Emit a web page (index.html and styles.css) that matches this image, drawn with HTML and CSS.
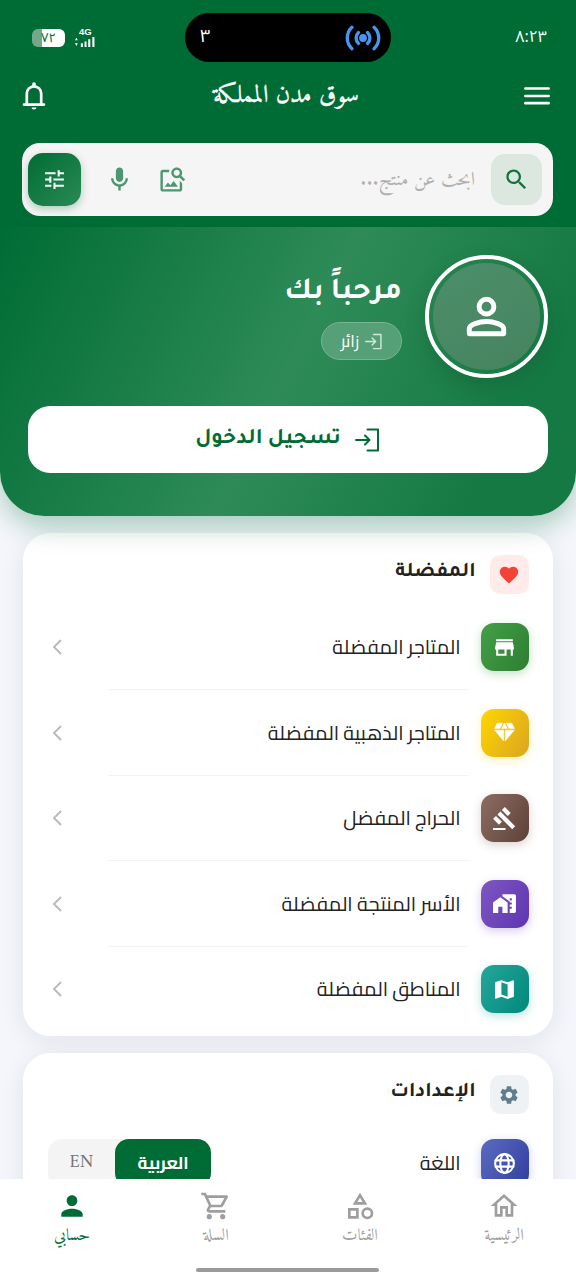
FILE: index.html
```html
<!DOCTYPE html>
<html lang="ar" dir="rtl">
<head>
<meta charset="utf-8">
<title>سوق مدن المملكة</title>
<link rel="stylesheet" href="styles.css">
</head>
<body>
<div class="app">
  <header class="top">
    <div class="status">
      <span class="clock">٨:٢٣</span>
      <div class="island">
        <svg class="cast" viewBox="0 0 36 28"><circle cx="18" cy="14" r="3.900" fill="#4795ee"/><path d="M13.500 8.500a7.500 7.500 0 0 0 0 11M22.500 8.500a7.500 7.500 0 0 1 0 11M7 3.300a14.500 14.500 0 0 0 0 21.400M29 3.300a14.500 14.500 0 0 1 0 21.400" fill="none" stroke="#4795ee" stroke-width="3.300" stroke-linecap="round"/></svg>
        <span class="count">٣</span>
      </div>
      <div class="phone">
        <div class="signal"><span class="gen">4G</span>
          <svg viewBox="0 0 22 12"><path d="M0 4.500 1.600 2 3.200 4.500zM0 8 1.600 11 3.200 8zM6.500 8h2.200v4H6.500zM10.500 6h2.200v6h-2.200zM14.500 3.500h2.300V12h-2.300zM19 1h2.300v11H19z" fill="#fff"/></svg>
        </div>
        <div class="battery"><span>٧٢</span></div>
      </div>
    </div>
    <div class="bar">
      <svg class="menu" viewBox="0 0 26 18"><path d="M1.400 1.500h23.200M1.400 9h23.200M1.400 16.200h23.200" stroke="#fff" stroke-width="2.700" stroke-linecap="round"/></svg>
      <h1 class="title">سوق مدن المملكة</h1>
      <svg class="bell line" viewBox="0 0 24 28"><path d="M2 22.600h20M4.800 22V11.500a7.200 7.200 0 0 1 14.400 0V22" stroke-width="2.700"/><path d="M12 3V2" stroke-width="3.600"/><path d="M9.500 25.500h5a2.500 2 0 0 1-5 0z" fill="#fff" stroke="none"/></svg>
    </div>
    <div class="search">
      <div class="find"><svg viewBox="0 0 24 24"><path d="M15.500 14h-.79l-.28-.27C15.410 12.590 16 11.110 16 9.500 16 5.910 13.090 3 9.500 3S3 5.910 3 9.500 5.910 16 9.500 16c1.610 0 3.090-.59 4.230-1.570l.27.28v.79l5 4.990L20.490 19l-4.990-5zm-6 0C7.010 14 5 11.990 5 9.500S7.010 5 9.500 5 14 7.010 14 9.500 11.990 14 9.500 14z"/></svg></div>
      <span class="hint">ابحث عن منتج<span class="dots">...</span></span>
      <svg class="imgsearch" viewBox="0 0 24 24"><path d="M18 13v7H4V6h5.020c.05-.71.22-1.380.48-2H4c-1.100 0-2 .9-2 2v14c0 1.100.9 2 2 2h14c1.100 0 2-.9 2-2v-5l-2-2zm-1.500 5h-11l2.750-3.530 1.960 2.360 2.750-3.540L16.500 18zm2.800-9.110c.44-.7.7-1.510.7-2.390C20 4.010 17.990 2 15.500 2S11 4.010 11 6.500s2.010 4.500 4.490 4.500c.88 0 1.700-.26 2.390-.7L21 13.420 22.420 12 19.300 8.890zM15.500 9C14.120 9 13 7.880 13 6.500S14.120 4 15.500 4 18 5.120 18 6.500 16.880 9 15.500 9z"/></svg>
      <svg class="mic" viewBox="0 0 24 24"><path d="M12 14c1.660 0 3-1.340 3-3V5c0-1.660-1.340-3-3-3S9 3.340 9 5v6c0 1.660 1.340 3 3 3zm5-3c0 2.760-2.240 5-5 5s-5-2.240-5-5H5c0 3.530 2.610 6.430 6 6.920V21h2v-3.080c3.390-.49 6-3.390 6-6.920h-2z"/></svg>
      <div class="tune"><svg viewBox="0 0 24 24"><path d="M3 17v2h6v-2H3zM3 5v2h10V5H3zm10 16v-2h8v-2h-8v-2h-2v6h2zM7 9v2H3v2h4v2h2V9H7zm14 4v-2H11v2h10zm-6-4h2V7h4V5h-4V3h-2v6z"/></svg></div>
    </div>
  </header>

  <section class="hero">
    <div class="profile">
      <div class="avatar"><div class="face"><svg class="line" viewBox="0 0 24 24"><circle cx="12" cy="8" r="3"/><path d="M5 19v-2c0-1.600 4-3 7-3s7 1.400 7 3v2z"/></svg></div></div>
      <div class="who">
        <h2 class="hello">مرحباً بك</h2>
        <div class="guest"><svg class="line" viewBox="0 0 24 24"><path d="M1 12h13M10 7l5 5-5 5M12 2h10.500v20H12"/></svg><span>زائر</span></div>
      </div>
    </div>
    <div class="login"><svg class="line" viewBox="0 0 24 24"><path d="M1 12h13M10 7.500l4.500 4.500-4.500 4.500M12.500 1.500h10.500v21H12.500"/></svg><span>تسجيل الدخول</span></div>
  </section>

  <main class="content">
    <section class="card">
      <div class="head"><div class="badge red"><svg viewBox="0 0 24 24"><path d="M12 21.350l-1.450-1.320C5.400 15.360 2 12.280 2 8.500 2 5.420 4.420 3 7.500 3c1.740 0 3.410.81 4.500 2.090C13.090 3.810 14.760 3 16.500 3 19.580 3 22 5.420 22 8.500c0 3.780-3.400 6.860-8.550 11.540L12 21.350z"/></svg></div><h3>المفضلة</h3></div>
      <div class="row"><div class="tile green"><svg viewBox="0 0 24 24"><path d="M20 4H4v2h16V4zm1 10v-2l-1-5H4l-1 5v2h1v6h10v-6h4v6h2v-6h1zm-9 4H6v-4h6v4z"/></svg></div><span class="label">المتاجر المفضلة</span><svg class="chev" viewBox="0 0 10 16"><path d="M9 1 2 8l7 7"/></svg></div>
      <div class="row"><div class="tile gold"><svg viewBox="0 0 24 24"><path d="M12.160 3h-.32L9.210 8.250h5.580zm4.300 5.250h5.160L19 3h-5.160zm4.920 1.500h-8.630V20.100zM11.250 20.100V9.750H2.620zM7.540 8.250 10.160 3H5L2.380 8.250z" stroke="#fff" stroke-width=".5" stroke-linejoin="round"/></svg></div><span class="label">المتاجر الذهبية المفضلة</span><svg class="chev" viewBox="0 0 10 16"><path d="M9 1 2 8l7 7"/></svg></div>
      <div class="row"><div class="tile brown"><svg viewBox="0 0 24 24"><path d="M1 21h12v2H1v-2zM5.240 8.070l2.830-2.830 14.140 14.140-2.830 2.830L5.240 8.070zM12.320 1l5.660 5.660-2.830 2.830-5.660-5.660L12.320 1zM3.830 9.480l5.660 5.660-2.830 2.830L1 12.310l2.830-2.830z"/></svg></div><span class="label">الحراج المفضل</span><svg class="chev" viewBox="0 0 10 16"><path d="M9 1 2 8l7 7"/></svg></div>
      <div class="row"><div class="tile purple"><svg viewBox="0 0 24 24"><path fill-rule="evenodd" d="M1 11v10h5v-6h4v6h5V11L8 6zM10 3v1.970l7 5V11h2v2h-2v2h2v2h-2v4h4.500q1.500 0 1.500-1.500v-15q0-1.500-1.500-1.500zM19 9h-2V7h2v2z"/></svg></div><span class="label">الأسر المنتجة المفضلة</span><svg class="chev" viewBox="0 0 10 16"><path d="M9 1 2 8l7 7"/></svg></div>
      <div class="row last"><div class="tile teal"><svg viewBox="0 0 24 24"><path d="M20.500 3l-.16.03L15 5.100 9 3 3.360 4.900c-.21.07-.36.25-.36.48V20.500c0 .28.22.5.5.5l.16-.03L9 18.900l6 2.100 5.640-1.900c.21-.07.36-.25.36-.48V3.500c0-.28-.22-.5-.5-.5zM15 19l-6-2.110V5l6 2.110V19z"/></svg></div><span class="label">المناطق المفضلة</span><svg class="chev" viewBox="0 0 10 16"><path d="M9 1 2 8l7 7"/></svg></div>
    </section>
    <section class="card">
      <div class="head"><div class="badge gray"><svg viewBox="0 0 24 24"><path d="M19.140 12.940c.04-.3.06-.61.06-.94 0-.32-.02-.64-.07-.94l2.030-1.580c.18-.14.23-.41.12-.61l-1.920-3.320c-.12-.22-.37-.29-.59-.22l-2.390.96c-.5-.38-1.030-.7-1.620-.94l-.36-2.540c-.04-.24-.24-.41-.48-.41h-3.840c-.24 0-.43.17-.47.41l-.36 2.540c-.59.24-1.130.57-1.620.94l-2.390-.96c-.22-.08-.47 0-.59.22L2.740 8.870c-.12.21-.08.47.12.61l2.030 1.580c-.05.3-.09.63-.09.94s.02.64.07.94l-2.030 1.580c-.18.14-.23.41-.12.61l1.920 3.320c.12.22.37.29.59.22l2.390-.96c.5.38 1.030.7 1.620.94l.36 2.540c.05.24.24.41.48.41h3.840c.24 0 .44-.17.47-.41l.36-2.540c.59-.24 1.130-.56 1.620-.94l2.390.96c.22.08.47 0 .59-.22l1.920-3.320c.12-.22.07-.47-.12-.61l-2.010-1.580zM12 15.600c-1.980 0-3.600-1.620-3.600-3.600s1.620-3.600 3.600-3.600 3.600 1.620 3.600 3.600-1.620 3.600-3.600 3.600z"/></svg></div><h3>الإعدادات</h3></div>
      <div class="row lang last"><div class="tile indigo"><svg class="line" viewBox="0 0 24 24"><circle cx="12" cy="12" r="9"/><ellipse cx="12" cy="12" rx="4" ry="9"/><path d="M3.500 9h17M3.500 15h17"/></svg></div><span class="label">اللغة</span>
        <div class="toggle"><span class="on">العربية</span><span class="en">EN</span></div>
      </div>
    </section>
  </main>

  <nav class="tabs">
    <div class="tab"><svg viewBox="0 0 24 24"><path d="M12 5.690l5 4.500V18h-2v-6H9v6H7v-7.810l5-4.500M12 3L2 12h3v8h6v-6h2v6h6v-8h3L12 3z"/></svg><span>الرئيسية</span></div>
    <div class="tab"><svg viewBox="0 0 24 24"><path fill-rule="evenodd" d="M12 2 6.500 11h11zM12 5.840 13.930 9h-3.870zM17.500 13a4.500 4.500 0 1 0 0 9 4.500 4.500 0 0 0 0-9zm0 7a2.500 2.500 0 1 1 0-5 2.500 2.500 0 0 1 0 5zM3 21.500h8v-8H3zm2-6h4v4H5z"/></svg><span>الفئات</span></div>
    <div class="tab"><svg viewBox="0 0 24 24"><path d="M15.550 13c.75 0 1.410-.41 1.750-1.030l3.580-6.490c.37-.66-.11-1.480-.87-1.480H5.210l-.94-2H1v2h2l3.600 7.590-1.350 2.440C4.520 15.370 5.480 17 7 17h12v-2H7l1.100-2h7.450zM6.160 6h12.150l-2.760 5H8.530L6.160 6zM7 18c-1.100 0-1.990.9-1.990 2S5.900 22 7 22s2-.9 2-2-.9-2-2-2zm10 0c-1.100 0-1.990.9-1.990 2s.89 2 1.990 2 2-.9 2-2-.9-2-2-2z"/></svg><span>السلة</span></div>
    <div class="tab active"><svg viewBox="0 0 24 24"><path d="M12 12c2.210 0 4-1.790 4-4s-1.790-4-4-4-4 1.790-4 4 1.790 4 4 4zm0 2c-2.670 0-8 1.340-8 4v2h16v-2c0-2.660-5.330-4-8-4z"/></svg><span>حسابي</span></div>
    <div class="grip"></div>
  </nav>
</div>
</body>
</html>
```
FILE: styles.css
```css
* { box-sizing: border-box; }
body { margin: 0; font-family: Cairo, "Noto Sans Arabic", "DejaVu Sans", sans-serif; }
svg { display: block; flex: none; fill: currentColor; }
.line { fill: none; stroke: currentColor; stroke-width: 2; stroke-linecap: round; stroke-linejoin: round; }
h1, h2, h3 { margin: 0; white-space: nowrap; }
span { white-space: nowrap; }

.app { width: 576px; height: 1280px; overflow: hidden; display: flex; flex-direction: column; background: #f4f6fb; }

.top { height: 227px; flex: none; background: #006c35; color: #fff; position: relative; z-index: 3; }
.status { height: 76px; padding: 13px 29px 0 32px; display: grid; grid-template-columns: 156px 206px 1fr; }
.clock { font: 16px/48px "Noto Sans Arabic", "DejaVu Sans", sans-serif; letter-spacing: -1px; }
.island { height: 49px; border-radius: 25px; background: #000; display: flex; justify-content: space-between; align-items: center; padding: 0 10px 0 15px; }
.cast { width: 36px; height: 28px; }
.count { font: 18px/42px "Noto Sans Arabic", "DejaVu Sans", sans-serif; margin-bottom: 4px; }
.phone { display: flex; justify-content: flex-end; gap: 9px; padding-top: 15px; }
.signal { width: 22px; direction: ltr; }
.gen { display: block; font: bold 9.500px/8px "Liberation Sans", sans-serif; padding-left: 5px; }
.signal svg { width: 22px; height: 11px; }
.battery { width: 33px; height: 18px; margin-top: 1px; border-radius: 6px; background: linear-gradient(90deg, #72a98a 10px, #fff 10px); color: #006c35; font: 13px/18px "Noto Sans Arabic", sans-serif; text-align: center; }
.bar { height: 67px; padding: 0 26px 27px 22px; display: flex; justify-content: space-between; align-items: center; }
.menu { width: 26px; height: 18px; }
.title { font: 400 25px/36px Amiri, "Noto Naskh Arabic", serif; -webkit-text-stroke: .4px; padding-left: 2px; }
.bell { width: 24px; height: 28px; }

.search { margin: 0 23px 0 22px; height: 73px; border-radius: 18px; background: #f5f5f5; display: flex; align-items: center; padding: 0 11px 0 6px; }
.find { width: 51px; height: 51px; border-radius: 14px; background: #dce7e0; color: #11713f; display: grid; place-items: center; }
.find svg { width: 27px; height: 27px; }
.hint { flex: 1; padding-right: 16px; font: 19.500px/30px Amiri, "Noto Naskh Arabic", serif; color: #b0b0b0; }
.dots { letter-spacing: 1px; }
.imgsearch, .mic { width: 29px; height: 29px; color: #4d9770; }
.mic { margin: 0 24px 0 24px; }
.tune { width: 53px; height: 53px; border-radius: 15px; background: linear-gradient(135deg, #006c35, #2a8a55); box-shadow: 0 3px 9px rgba(0,108,53,.3); display: grid; place-items: center; }
.tune svg { width: 25px; height: 25px; }

.hero { height: 289px; flex: none; position: relative; z-index: 2; border-radius: 0 0 44px 44px; padding: 28px; background: linear-gradient(117deg, #006c35 0%, #2e8b57 50%, #157943 85%, #157943 100%); box-shadow: 0 11px 27px rgba(0,108,53,.3); color: #fff; }
.profile { display: flex; height: 151px; gap: 23px; }
.avatar { width: 123px; height: 123px; border: 4px solid #fff; border-radius: 50%; padding: 4px; box-shadow: 0 8px 20px rgba(0,60,30,.2); }
.face { height: 107px; border-radius: 50%; background: linear-gradient(150deg, #4c8f6a, #46835f); display: grid; place-items: center; }
.face svg { width: 59px; height: 59px; }
.who { padding-top: 14px; }
.hello { height: 53px; font: 700 30.500px/50px Tajawal, Cairo, sans-serif; }
.guest { width: 81px; height: 38px; border: 1px solid #79b492; border-radius: 19px; background: #55a077; display: flex; align-items: center; justify-content: center; gap: 6px; font-size: 17px; }
.guest svg { width: 17px; height: 17px; opacity: .75; }
.login { height: 67px; border-radius: 22px; background: #fff; color: #006c35; display: flex; align-items: center; justify-content: center; gap: 14px; padding-right: 2px; font: 700 22.300px/56px Tajawal, Cairo, sans-serif; }
.login svg { width: 24px; height: 24px; }

.content { flex: 1; min-height: 0; overflow: hidden; padding: 17px 23px 0; display: flex; flex-direction: column; gap: 17px; position: relative; z-index: 1; }
.card { flex: none; background: #fff; border-radius: 27px; box-shadow: 0 5px 26px rgba(30,30,60,.08); padding: 22px 24.500px 0 25px; height: 503px; }
.head { display: flex; gap: 14px; height: 49.500px; }
.head h3 { font: 700 20.800px/37px Tajawal, Cairo, sans-serif; color: #222; }
.badge { width: 39px; height: 39px; border-radius: 10px; display: grid; place-items: center; }
.badge svg { width: 22px; height: 22px; }
.red { background: #feebea; color: #f44336; }
.gray { background: #eef2f4; color: #607d8b; }
.row { height: 85.500px; display: flex; align-items: center; gap: 20px; background: linear-gradient(#f3f3f3, #f3f3f3) 60px 100% / 361px 1px no-repeat; }
.row.last { background: none; }
.tile { width: 48px; height: 48px; border-radius: 13px; color: #fff; display: grid; place-items: center; }
.tile svg { width: 25px; height: 25px; }
.green { background: linear-gradient(120deg, #43a047, #2e7d32); box-shadow: 0 3px 10px #43a04750; }
.gold { background: linear-gradient(120deg, #ffd600, #daa520); box-shadow: 0 3px 10px #ffd60050; }
.brown { background: linear-gradient(120deg, #8d6e63, #5d4037); box-shadow: 0 3px 10px #8d6e6350; }
.purple { background: linear-gradient(120deg, #7e57c2, #5e35b1); box-shadow: 0 3px 10px #7e57c250; }
.teal { background: linear-gradient(120deg, #26a69a, #00897b); box-shadow: 0 3px 10px #26a69a50; }
.indigo { background: linear-gradient(120deg, #5c6bc0, #303f9f); box-shadow: 0 3px 10px #5c6bc050; }
.label { flex: 1; font-size: 19.800px; line-height: 28px; color: #222; }
.chev { width: 10px; height: 16px; margin-left: 4px; fill: none; stroke: #b8b8b8; stroke-width: 1.800; }
.lang { height: 77px; }
.toggle { width: 163px; height: 48px; border-radius: 14px; background: #f4f4f4; display: flex; }
.on { width: 96px; height: 48px; border-radius: 14px; background: #006c35; color: #fff; text-align: center; font-weight: 700; line-height: 28px; padding-top: 10px; font-size: 17px; }
.en { flex: 1; text-align: center; font: 18px/48px Amiri, "Liberation Serif", serif; color: #757575; }

.tabs { height: 101px; flex: none; background: #fff; position: relative; z-index: 3; display: grid; grid-template-columns: repeat(4, 144px); padding-top: 11px; }
.tab { display: flex; flex-direction: column; align-items: center; color: #9e9e9e; font: 16.500px/26px Amiri, "Noto Naskh Arabic", serif; }
.tab svg { width: 32px; height: 32px; margin-bottom: 1px; }
.active { color: #006c35; }
.grip { position: absolute; left: 196px; bottom: 8px; width: 183px; height: 4px; border-radius: 2px; background: #9a9a9a; }
```
